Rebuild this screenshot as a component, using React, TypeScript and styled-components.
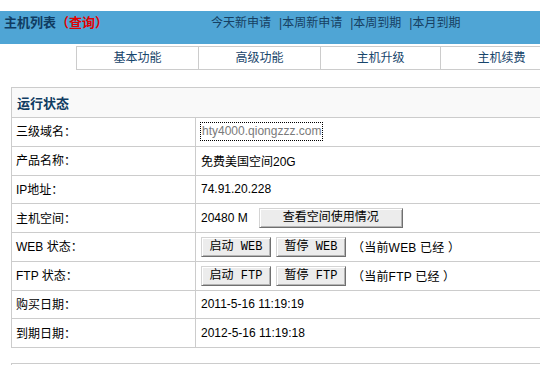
import React from 'react';
import styled, { createGlobalStyle } from 'styled-components';

const GlobalStyle = createGlobalStyle`
  html, body {
    margin: 0;
    padding: 0;
    background: #ffffff;
    overflow: hidden;
  }
  body {
    font-family: "Liberation Sans", "Noto Sans CJK SC", sans-serif;
    font-size: 12px;
    color: #000;
  }
  #root {
    width: 600px;
  }
`;

const navy = '#0f3c62';
const line = '#cccccc';

const Page = styled.div`
  padding-top: 11px;
`;

const TopBar = styled.div`
  display: flex;
  align-items: flex-start;
  height: 33px;
  background: #4fa5d5;
  line-height: 24px;
`;

const TitleBlock = styled.div`
  width: 207px;
  padding-left: 4px;
  font-size: 13px;
  font-weight: bold;
  color: ${navy};
`;

const Query = styled.span`
  color: #e30000;
`;

const NavLinks = styled.nav`
  display: flex;
  gap: 8px;
  font-size: 12px;
  color: #163f62;
`;

const NavLink = styled.a`
  color: inherit;
  text-decoration: none;
`;

const TabRow = styled.div`
  display: flex;
  margin: 2px 0 0 76px;
  height: 24px;
  box-sizing: border-box;
  border-top: 1px solid ${line};
  border-bottom: 1px solid ${line};
`;

const Tab = styled.div<{ $w?: number }>`
  width: ${(p) => p.$w ?? 122}px;
  box-sizing: border-box;
  border-left: 1px solid ${line};
  text-align: center;
  line-height: 22px;
  color: #17456b;
`;

const Panel = styled.section`
  margin: 17px 0 0 11px;
  border: 1px solid ${line};
`;

const PanelHeader = styled.div`
  height: 29px;
  display: flex;
  align-items: center;
  padding-left: 5px;
  background: #f9f9f9;
  font-size: 13px;
  font-weight: bold;
  color: ${navy};
`;

const Row = styled.div`
  display: grid;
  grid-template-columns: 183px 1fr;
  height: 28.75px;
  box-sizing: border-box;
  border-top: 1px solid ${line};
`;

const Label = styled.div`
  display: flex;
  align-items: center;
  padding-left: 4px;
  margin-top: -2px;
`;

const Value = styled.div`
  display: flex;
  align-items: center;
  gap: 5px;
  padding-left: 5px;
  border-left: 1px solid ${line};
`;

const DomainField = styled.span`
  margin-left: -1px;
  padding: 0 1px;
  height: 17px;
  line-height: 17px;
  border: 1px dotted #000;
  color: #7a7a7a;
  font-size: 12px;
`;

const Button = styled.button<{ $w: number }>`
  width: ${(p) => p.$w}px;
  height: 20px;
  padding: 0;
  font-family: "Liberation Mono", "Noto Sans CJK SC", monospace;
  font-size: 12px;
  color: #000;
  background: #ececec;
  border: 1px solid;
  border-color: #d4d4d4 #6f6f6f #6f6f6f #d4d4d4;
  box-shadow: inset 1px 1px 0 #ffffff, inset -1px -1px 0 #b4b4b4;
  line-height: 16px;
`;

const Space = styled.span`
  margin-right: 6px;
`;

const Note = styled.span`
  margin-left: 1px;
  letter-spacing: 0.2px;
`;

const BottomPanel = styled.section`
  margin: 15px 0 0 11px;
  height: 40px;
  border: 1px solid ${line};
  border-bottom: none;
`;

const rows: { label: string; value: React.ReactNode }[] = [
  { label: '三级域名：', value: <DomainField>hty4000.qiongzzz.com</DomainField> },
  { label: '产品名称：', value: '免费美国空间20G' },
  { label: 'IP地址：', value: '74.91.20.228' },
  {
    label: '主机空间：',
    value: (
      <>
        <Space>20480 M</Space>
        <Button $w={144}>查看空间使用情况</Button>
      </>
    ),
  },
  {
    label: 'WEB 状态：',
    value: (
      <>
        <Button $w={70}>启动 WEB</Button>
        <Button $w={70}>暂停 WEB</Button>
        <Note>（当前WEB 已经 ）</Note>
      </>
    ),
  },
  {
    label: 'FTP 状态：',
    value: (
      <>
        <Button $w={70}>启动 FTP</Button>
        <Button $w={70}>暂停 FTP</Button>
        <Note>（当前FTP 已经 ）</Note>
      </>
    ),
  },
  { label: '购买日期：', value: '2011-5-16 11:19:19' },
  { label: '到期日期：', value: '2012-5-16 11:19:18' },
];

const App: React.FC = () => {
  return (
    <>
      <GlobalStyle />
      <Page>
        <TopBar>
          <TitleBlock>
            主机列表<Query>（查询）</Query>
          </TitleBlock>
          <NavLinks>
            <NavLink href="#">今天新申请</NavLink>
            <NavLink href="#">|本周新申请</NavLink>
            <NavLink href="#">|本周到期</NavLink>
            <NavLink href="#">|本月到期</NavLink>
          </NavLinks>
        </TopBar>
        <TabRow>
          <Tab>基本功能</Tab>
          <Tab>高级功能</Tab>
          <Tab $w={120}>主机升级</Tab>
          <Tab>主机续费</Tab>
        </TabRow>
        <Panel>
          <PanelHeader>运行状态</PanelHeader>
          {rows.map((r) => (
            <Row key={r.label}>
              <Label>{r.label}</Label>
              <Value>{r.value}</Value>
            </Row>
          ))}
        </Panel>
        <BottomPanel />
      </Page>
    </>
  );
};

export default App;
